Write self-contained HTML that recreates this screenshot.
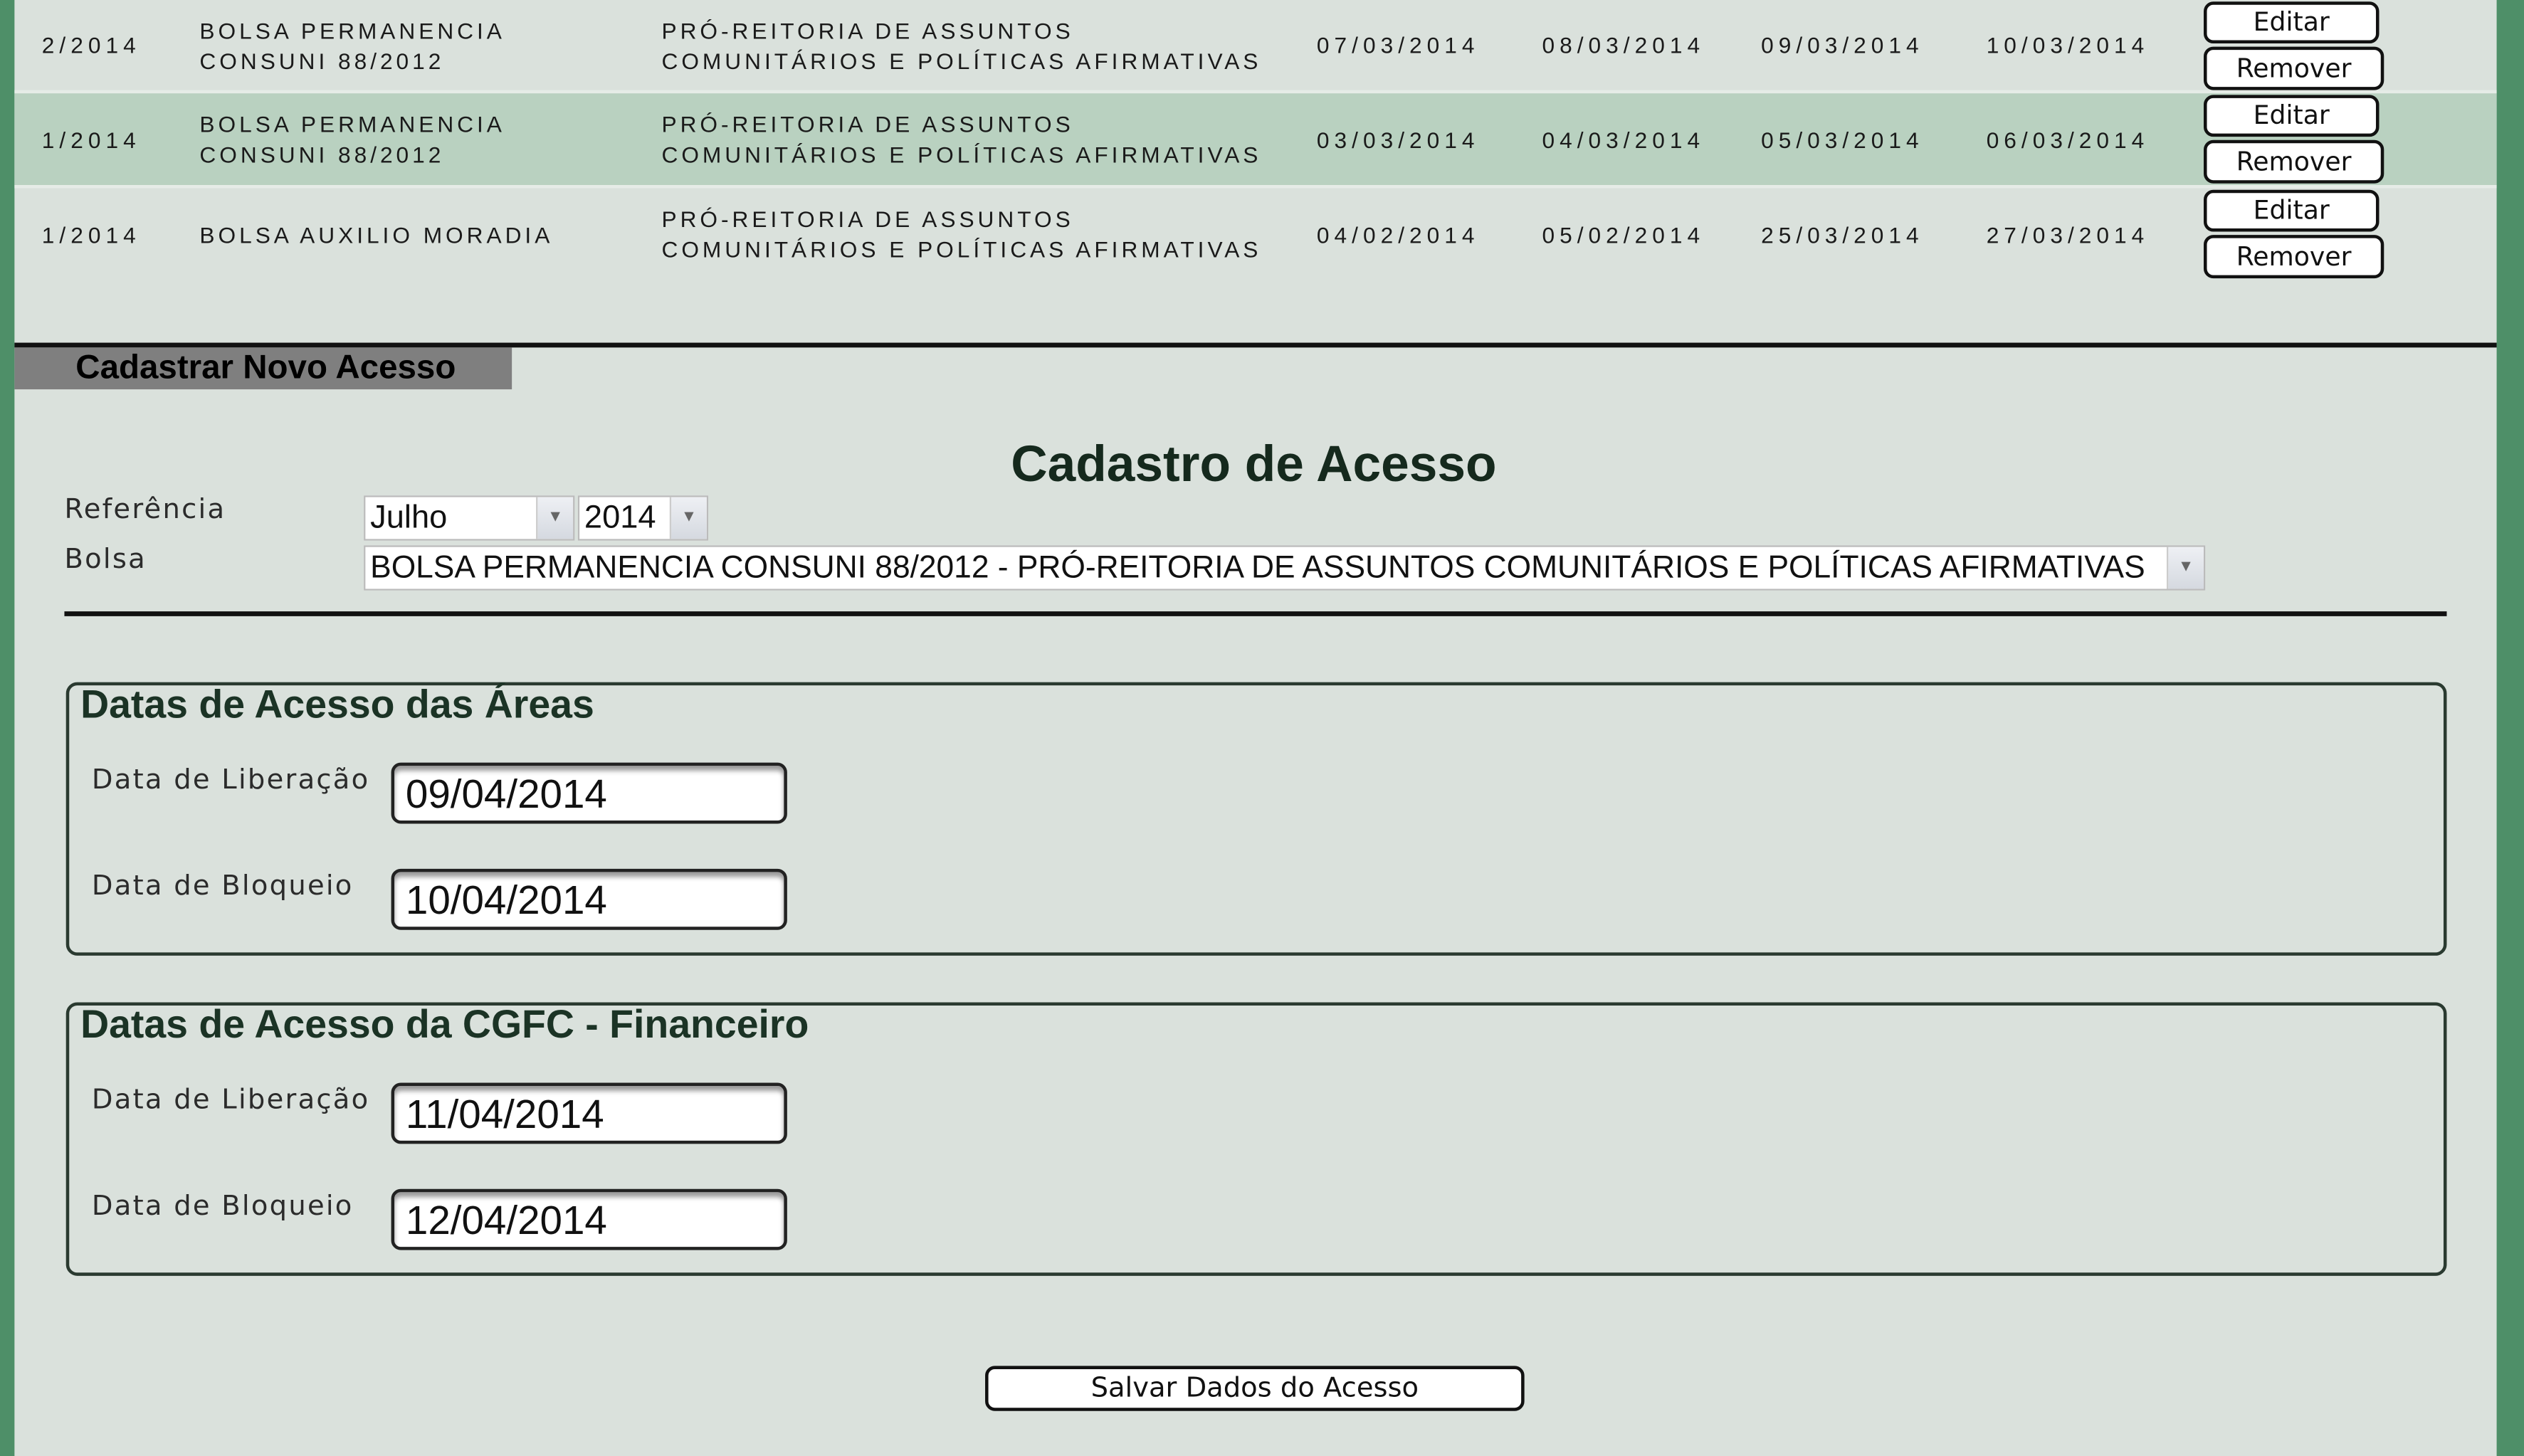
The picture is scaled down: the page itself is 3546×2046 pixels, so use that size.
<!DOCTYPE html>
<html><head><meta charset="utf-8"><style>
html,body{margin:0;padding:0;width:3546px;height:2046px;overflow:hidden;background:#dae1dc}
#w{position:absolute;left:0;top:0;width:1568px;height:905px;transform:scale(2.2615,2.2608);transform-origin:0 0;background:#dae1dc;font-family:"DejaVu Sans","Liberation Sans",sans-serif;color:#111}
.a{position:absolute;white-space:nowrap}
.t{font-family:"Liberation Sans",sans-serif;font-size:14px;letter-spacing:2.2px;line-height:19px;color:#1a1a1a}
.d{letter-spacing:3.1px}
.btn{position:absolute;background:#fff;border:2px solid #111;border-radius:6px;box-sizing:border-box;text-align:center;font-family:"DejaVu Sans",sans-serif;font-size:16px;color:#111}
.lbl{font-size:17px;color:#2b2b2b;letter-spacing:1px}
.inp{position:absolute;width:246px;height:38px;box-sizing:border-box;border:2px solid #222;border-radius:6px;background:#fff;box-shadow:inset 0 3px 3px #999;font-family:"Liberation Sans",sans-serif;font-size:25px;line-height:36px;padding-left:7px;color:#111}
.fs{position:absolute;left:41px;width:1479px;height:170px;box-sizing:border-box;border:2px solid #2a3a30;border-radius:7px}
.fst{font-family:"Liberation Sans",sans-serif;font-weight:bold;font-size:24.5px;color:#1b3325}
.sel{position:absolute;background:#fff;border:1px solid #bbb;box-sizing:border-box;font-size:20px;line-height:26px;padding-left:3px;font-family:"Liberation Sans",sans-serif;overflow:hidden}
.arr{position:absolute;right:0;top:0;bottom:0;width:22px;background:linear-gradient(#eef0f4,#d5d9e0);border-left:1px solid #ccc;color:#666;font-size:10px;text-align:center;line-height:26px}
</style></head><body><div id="w">
<div class="a" style="left:0;top:0;width:9px;height:905px;background:#4e8f68"></div>
<div class="a" style="left:1551px;top:0;width:17px;height:905px;background:#4e8f68"></div>
<div class="a" style="left:9px;top:58px;width:1542px;height:57px;background:#b9d1c0"></div>
<div class="a" style="left:9px;top:56px;width:1542px;height:2px;background:#e6ece7"></div>
<div class="a" style="left:9px;top:115px;width:1542px;height:2px;background:#e6ece7"></div>

<div class="a t d" style="left:26px;top:19px">2/2014</div>
<div class="a t" style="left:124px;top:10px">BOLSA PERMANENCIA<br>CONSUNI 88/2012</div>
<div class="a t" style="left:411px;top:10px">PRÓ-REITORIA DE ASSUNTOS<br>COMUNITÁRIOS E POLÍTICAS AFIRMATIVAS</div>
<div class="a t d" style="left:818px;top:19px">07/03/2014</div><div class="a t d" style="left:958px;top:19px">08/03/2014</div><div class="a t d" style="left:1094px;top:19px">09/03/2014</div><div class="a t d" style="left:1234px;top:19px">10/03/2014</div>

<div class="a t d" style="left:26px;top:78px">1/2014</div>
<div class="a t" style="left:124px;top:68px">BOLSA PERMANENCIA<br>CONSUNI 88/2012</div>
<div class="a t" style="left:411px;top:68px">PRÓ-REITORIA DE ASSUNTOS<br>COMUNITÁRIOS E POLÍTICAS AFIRMATIVAS</div>
<div class="a t d" style="left:818px;top:78px">03/03/2014</div><div class="a t d" style="left:958px;top:78px">04/03/2014</div><div class="a t d" style="left:1094px;top:78px">05/03/2014</div><div class="a t d" style="left:1234px;top:78px">06/03/2014</div>

<div class="a t d" style="left:26px;top:137px">1/2014</div>
<div class="a t" style="left:124px;top:137px">BOLSA AUXILIO MORADIA</div>
<div class="a t" style="left:411px;top:127px">PRÓ-REITORIA DE ASSUNTOS<br>COMUNITÁRIOS E POLÍTICAS AFIRMATIVAS</div>
<div class="a t d" style="left:818px;top:137px">04/02/2014</div><div class="a t d" style="left:958px;top:137px">05/02/2014</div><div class="a t d" style="left:1094px;top:137px">25/03/2014</div><div class="a t d" style="left:1234px;top:137px">27/03/2014</div>

<div class="btn" style="left:1369px;top:1px;width:109px;height:26px;line-height:22px">Editar</div>
<div class="btn" style="left:1369px;top:29px;width:112px;height:27px;line-height:23px">Remover</div>
<div class="btn" style="left:1369px;top:59px;width:109px;height:26px;line-height:22px">Editar</div>
<div class="btn" style="left:1369px;top:87px;width:112px;height:27px;line-height:23px">Remover</div>
<div class="btn" style="left:1369px;top:118px;width:109px;height:26px;line-height:22px">Editar</div>
<div class="btn" style="left:1369px;top:146px;width:112px;height:27px;line-height:23px">Remover</div>

<div class="a" style="left:9px;top:213px;width:1542px;height:3px;background:#111"></div>
<div class="a" style="left:9px;top:216px;width:309px;height:26px;background:#7f7f7f"></div>
<div class="a" style="left:47px;top:217px;font-family:'Liberation Sans',sans-serif;font-weight:bold;font-size:21px;color:#000">Cadastrar Novo Acesso</div>

<div class="a" style="left:628px;top:270px;font-family:'Liberation Sans',sans-serif;font-weight:bold;font-size:31.5px;color:#15291d">Cadastro de Acesso</div>

<div class="a lbl" style="left:40px;top:307px">Referência</div>
<div class="a lbl" style="left:40px;top:338px">Bolsa</div>
<div class="sel" style="left:226px;top:308px;width:131px;height:28px">Julho<div class="arr">▼</div></div>
<div class="sel" style="left:359px;top:308px;width:81px;height:28px">2014<div class="arr">▼</div></div>
<div class="sel" style="left:226px;top:339px;width:1144px;height:28px;font-size:19.6px">BOLSA PERMANENCIA CONSUNI 88/2012 - PRÓ-REITORIA DE ASSUNTOS COMUNITÁRIOS E POLÍTICAS AFIRMATIVAS<div class="arr">▼</div></div>

<div class="a" style="left:40px;top:380px;width:1480px;height:3px;background:#111"></div>

<div class="fs" style="top:424px"></div>
<div class="a fst" style="left:50px;top:425px">Datas de Acesso das Áreas</div>
<div class="a lbl" style="left:57px;top:475px">Data de Liberação</div>
<div class="inp" style="left:243px;top:474px">09/04/2014</div>
<div class="a lbl" style="left:57px;top:541px">Data de Bloqueio</div>
<div class="inp" style="left:243px;top:540px">10/04/2014</div>

<div class="fs" style="top:623px"></div>
<div class="a fst" style="left:50px;top:624px">Datas de Acesso da CGFC - Financeiro</div>
<div class="a lbl" style="left:57px;top:674px">Data de Liberação</div>
<div class="inp" style="left:243px;top:673px">11/04/2014</div>
<div class="a lbl" style="left:57px;top:740px">Data de Bloqueio</div>
<div class="inp" style="left:243px;top:739px">12/04/2014</div>

<div class="btn" style="left:612px;top:849px;width:335px;height:28px;line-height:25px;font-size:17px">Salvar Dados do Acesso</div>
</div></body></html>
